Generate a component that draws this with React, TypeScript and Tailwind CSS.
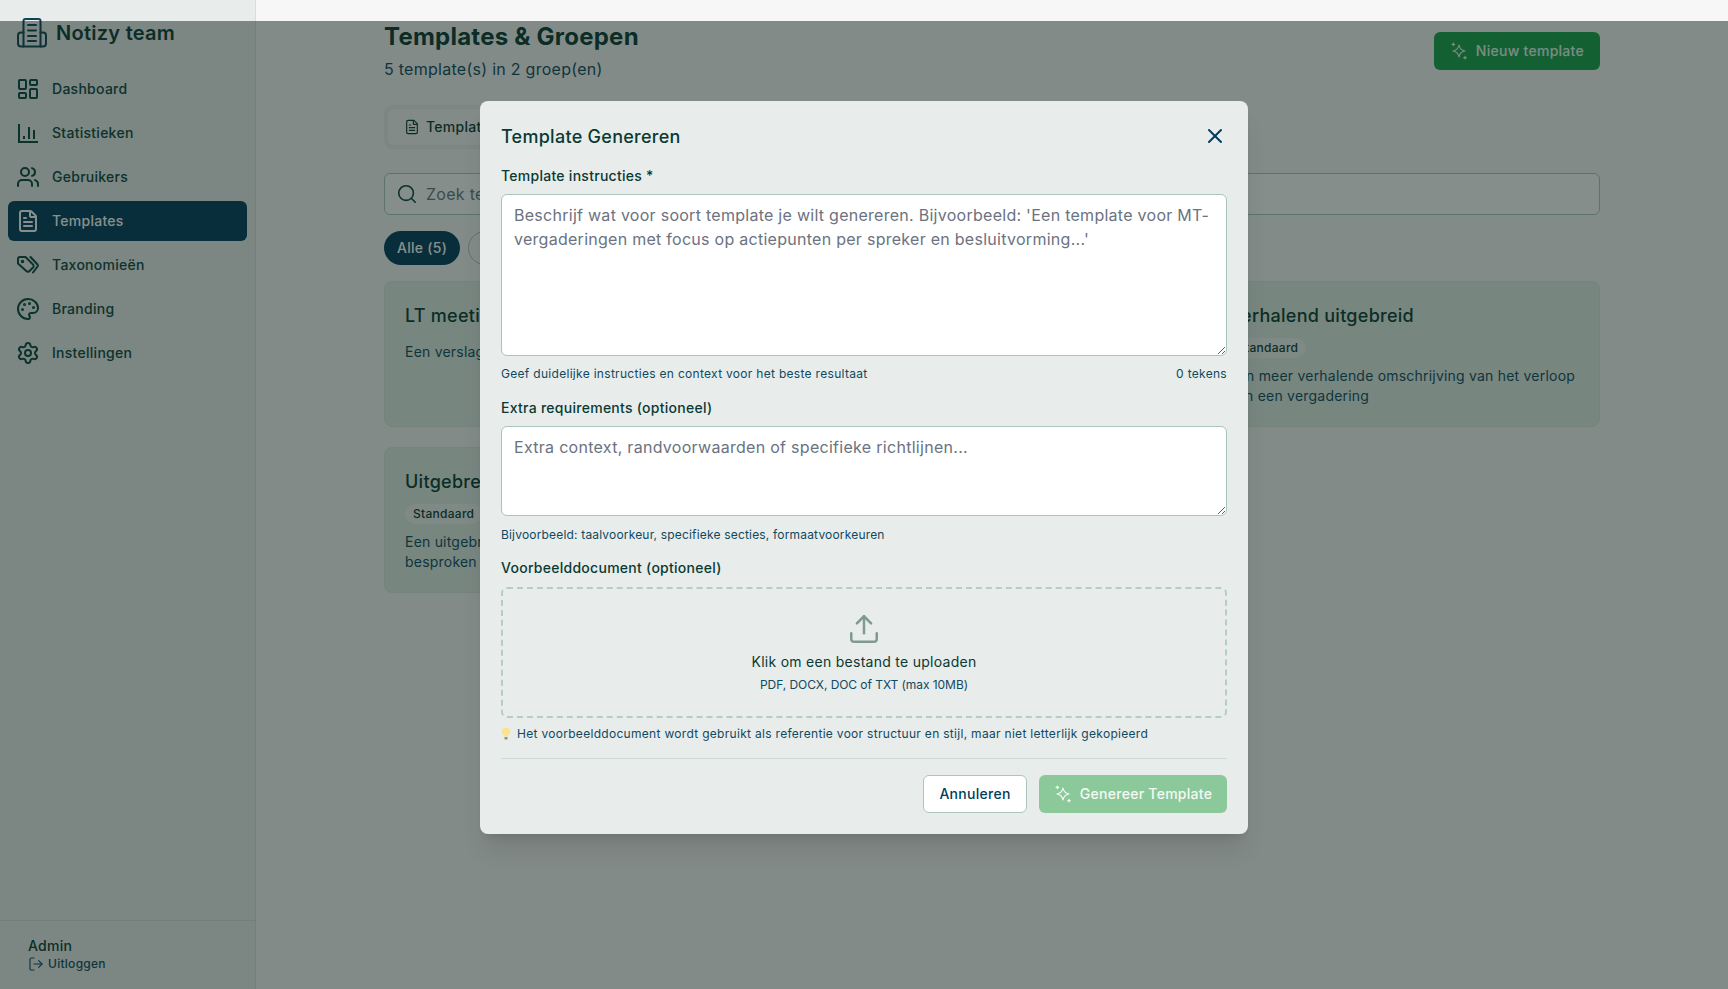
import { FileText, LayoutDashboard, LogOut, Palette, Search, Settings, Upload, Users, X } from 'lucide-react';
import type { FC, ReactNode } from 'react';

const ChartIcon = () => (
  <svg viewBox="0 0 24 24" width={24} height={24} fill="none" stroke="currentColor" strokeWidth={2}>
    <path d="M3 3v18h19" />
    <path d="M8 18v-3M13 18V6M18 18V9" />
  </svg>
);

const TagsIcon = () => (
  <svg viewBox="0 0 24 24" width={24} height={24} fill="none" stroke="currentColor" strokeWidth={2} strokeLinejoin="round" strokeLinecap="round">
    <path d="M2 6a2 2 0 0 1 2-2h5.500L17 11.500a2 2 0 0 1 0 3l-3.500 3.500a2.200 2.200 0 0 1-3.200 0L2 10.500z" />
    <path d="M14.500 4l7 7.500a1.500 1.500 0 0 1 0 2L17 19.500" />
    <circle cx="6.500" cy="8.500" r="0.800" fill="currentColor" />
  </svg>
);

const SparkleIcon: FC<{ size?: number }> = ({ size = 18 }) => (
  <svg viewBox="0 0 24 24" width={size} height={size} fill="none" stroke="currentColor" strokeWidth={1.6} strokeLinejoin="round" strokeLinecap="round" className="shrink-0">
    <path d="M12 4c.9 5 2.900 7.100 8 8-5.100.9-7.100 3-8 8-.9-5-2.900-7.100-8-8 5.100-.9 7.100-3 8-8z" />
    <path d="M4.500 1.500v3.500M2.800 3.200h3.400M20 19v3.500M18.300 20.800h3.400" />
  </svg>
);

const LogoIcon = () => (
  <svg viewBox="0 0 30 30" width={30} height={30} fill="none" stroke="#0f4357" strokeWidth={2} strokeLinejoin="round" strokeLinecap="round" className="shrink-0">
    <path d="M6.500 28.500V3a2 2 0 0 1 2-2h13a2 2 0 0 1 2 2v25.500z" />
    <path d="M6.500 14.500H4a3 3 0 0 0-3 3v8a3 3 0 0 0 3 3h2.500M23.500 14.500H26a3 3 0 0 1 3 3v8a3 3 0 0 1-3 3h-2.500" />
    <path d="M11 7h8M11 12.500h8M11 18h8M11 23h8" />
  </svg>
);

const BulbIcon = () => (
  <svg viewBox="0 0 10 14" width={10} height={14} className="shrink-0">
    <path d="M5 .5a4.200 4.200 0 0 0-2.400 7.600c.5.4.7 1 .7 1.700h3.400c0-.7.200-1.300.7-1.700A4.200 4.200 0 0 0 5 .500z" fill="#fbe38e" />
    <rect x="3.400" y="10" width="3.200" height="2.600" rx="1" fill="#8a8f8c" />
  </svg>
);

const navItems = [
  { label: 'Dashboard', icon: <LayoutDashboard size={24} strokeWidth={2} /> },
  { label: 'Statistieken', icon: <ChartIcon /> },
  { label: 'Gebruikers', icon: <Users size={24} strokeWidth={2} /> },
  { label: 'Templates', icon: <FileText size={24} strokeWidth={2} />, active: true },
  { label: 'Taxonomieën', icon: <TagsIcon /> },
  { label: 'Branding', icon: <Palette size={24} strokeWidth={2} /> },
  { label: 'Instellingen', icon: <Settings size={24} strokeWidth={2} /> },
];

const Sidebar = () => (
  <aside className="flex w-[256px] shrink-0 flex-col border-r border-[#d5dedb] bg-[#e8eceb]">
    <div className="flex items-center gap-[9px] pl-[17px] pt-[18px]">
      <LogoIcon />
      <span className="text-[20px] leading-7 font-semibold text-[#0a3a33]">Notizy team</span>
    </div>
    <nav className="mt-[21px] flex flex-col gap-1 px-2">
      {navItems.map((item) => (
        <div
          key={item.label}
          className={
            item.active
              ? 'flex h-10 items-center gap-3 rounded-md bg-[#003d5c] px-2 text-sm font-medium text-white'
              : 'flex h-10 items-center gap-3 rounded-md px-2 text-sm font-medium text-[#07443c]'
          }
        >
          {item.icon}
          <span>{item.label}</span>
        </div>
      ))}
    </nav>
    <div className="mt-auto h-[69px] border-t border-[#d5dedb] pl-[28px] pt-[15px]">
      <div className="text-sm leading-5 font-medium text-[#0a3a33]">Admin</div>
      <div className="flex items-center gap-1 text-xs leading-4 font-medium text-[#0f4a5f]">
        <LogOut size={16} strokeWidth={1.75} />
        <span>Uitloggen</span>
      </div>
    </div>
  </aside>
);

const TemplateCard: FC<{ title: string; tag?: boolean; description: string }> = ({ title, tag, description }) => (
  <div className="flex h-[146px] flex-col items-start rounded-lg border border-[#d8e5de] bg-[#e1ede6] p-5">
    <h3 className="text-[18px] leading-7 font-medium text-[#063a30]">{title}</h3>
    {tag && (
      <span className="mt-2 w-fit rounded-full bg-[#eef3f0] px-2 text-xs leading-5 font-medium text-[#0a3a33]">Standaard</span>
    )}
    <p className={tag ? 'mt-2 text-sm leading-5 tracking-[0.015em] text-[#0f4a5f]' : 'mt-3 text-sm leading-5 tracking-[0.015em] text-[#0f4a5f]'}>
      {description}
    </p>
  </div>
);

const MainContent = () => (
  <main className="min-w-0 flex-1 bg-[#f7f7f7] px-[128px] pt-[21px]">
    <div className="flex items-start justify-between">
      <div>
        <h1 className="text-2xl leading-8 font-bold tracking-[0.01em] text-[#063a30]">Templates &amp; Groepen</h1>
        <p className="mt-1 text-base leading-6 text-[#0f4a5f]">5 template(s) in 2 groep(en)</p>
      </div>
      <button className="mt-[11px] flex h-[38px] items-center gap-2 rounded-md bg-[#16a34a] px-4 text-sm font-medium text-white/90">
        <SparkleIcon />
        Nieuw template
      </button>
    </div>
    <div className="mt-6 flex h-11 w-fit gap-1 rounded-lg bg-[#e8eceb] p-1">
      <div className="flex items-center gap-[6px] rounded-md bg-[#f7f7f7] px-4 text-sm font-medium text-[#063a30]">
        <FileText size={16} strokeWidth={1.75} />
        Templates
      </div>
      <div className="flex items-center gap-2 rounded-md px-4 text-sm font-medium text-[#0f4a5f]">Groepen</div>
    </div>
    <div className="mt-6 flex h-[42px] items-center gap-2 rounded-md border border-[#a9c6bd] bg-white/60 px-[11px]">
      <Search size={22} strokeWidth={1.75} className="text-[#07443c]" />
      <span className="text-base text-[#5f7a80]">Zoek templates...</span>
    </div>
    <div className="mt-4 flex gap-2">
      <span className="flex h-[34px] items-center rounded-full bg-[#003d5c] px-[13px] text-sm font-medium text-white">Alle (5)</span>
      <span className="flex h-[34px] items-center rounded-full border border-[#a9c6bd] px-[13px] text-sm font-medium text-[#0f4a5f]">Notulen (3)</span>
    </div>
    <div className="mt-4 grid grid-cols-3 gap-5">
      <TemplateCard title="LT meeting" description="Een verslag van een LT meeting" />
      <TemplateCard title="Kort verslag" description="Een kort verslag van een vergadering" />
      <TemplateCard
        title="Verhalend uitgebreid"
        tag
        description="Een meer verhalende omschrijving van het verloop van een vergadering"
      />
      <TemplateCard
        title="Uitgebreid verslag"
        tag
        description="Een uitgebreid verslag met alle punten die zijn besproken in de vergadering"
      />
    </div>
  </main>
);

const Label: FC<{ children: ReactNode }> = ({ children }) => (
  <label className="block text-sm leading-5 font-medium text-[#0a3a33]">{children}</label>
);

const GenerateModal = () => (
  <div className="mt-[80px] h-fit w-[768px] rounded-lg bg-[#e8eceb] p-[21px] shadow-xl">
    <div className="flex h-7 items-center justify-between">
      <h2 className="text-[18px] font-medium text-[#0a3a33]">Template Genereren</h2>
      <X size={24} strokeWidth={2} className="text-[#003d5c]" />
    </div>
    <div className="mt-4">
      <Label>Template instructies *</Label>
      <textarea
        className="mt-2 block h-[162px] w-full rounded-md border border-[#a9c6bd] bg-white px-3 py-2 text-base leading-6 tracking-[0.017em] placeholder:text-[#6b7280]"
        placeholder="Beschrijf wat voor soort template je wilt genereren. Bijvoorbeeld: 'Een template voor MT-vergaderingen met focus op actiepunten per spreker en besluitvorming...'"
      />
      <div className="mt-[10px] flex justify-between text-xs leading-4 tracking-[0.025em] text-[#0f4a5f]">
        <span>Geef duidelijke instructies en context voor het beste resultaat</span>
        <span>0 tekens</span>
      </div>
    </div>
    <div className="mt-4">
      <Label>Extra requirements (optioneel)</Label>
      <textarea
        className="mt-2 block h-[90px] w-full rounded-md border border-[#a9c6bd] bg-white px-3 py-2 text-base leading-6 tracking-[0.018em] placeholder:text-[#6b7280]"
        placeholder="Extra context, randvoorwaarden of specifieke richtlijnen..."
      />
      <p className="mt-[11px] text-xs leading-4 tracking-[0.015em] text-[#0f4a5f]">Bijvoorbeeld: taalvoorkeur, specifieke secties, formaatvoorkeuren</p>
    </div>
    <div className="mt-[15px]">
      <Label>Voorbeelddocument (optioneel)</Label>
      <div className="mt-[9px] flex h-[131px] flex-col items-center rounded-md border-2 border-dashed border-[#b4cdc5] pt-[23px]">
        <Upload size={34} strokeWidth={1.75} className="text-[#7f9a93]" />
        <p className="mt-[6px] text-sm leading-5 text-[#0a3a33]">Klik om een bestand te uploaden</p>
        <p className="mt-[5px] text-xs leading-4 tracking-[-0.005em] text-[#0f4a5f]">PDF, DOCX, DOC of TXT (max 10MB)</p>
      </div>
      <p className="mt-2 flex items-center gap-[6px] text-xs leading-4 tracking-[0.025em] text-[#0f4a5f]">
        <BulbIcon />
        Het voorbeelddocument wordt gebruikt als referentie voor structuur en stijl, maar niet letterlijk gekopieerd
      </p>
    </div>
    <div className="mt-4 flex justify-end gap-3 border-t border-[#d0dad6] pt-4">
      <button className="h-[38px] w-[104px] rounded-md border border-[#a9c6bd] bg-white text-sm font-medium text-[#003d5c]">Annuleren</button>
      <button className="flex h-[38px] w-[188px] items-center justify-center gap-2 rounded-md bg-[#8cc99a] text-sm font-medium text-white/90">
        <SparkleIcon />
        Genereer Template
      </button>
    </div>
  </div>
);

export default function App() {
  return (
    <div className="relative flex h-[989px] w-[1728px] overflow-hidden font-['Inter',sans-serif] tracking-[0.017em]">
      <Sidebar />
      <MainContent />
      <div className="absolute inset-x-0 top-[21px] bottom-0 flex justify-center bg-[rgba(15,31,25,0.5)]">
        <GenerateModal />
      </div>
    </div>
  );
}
